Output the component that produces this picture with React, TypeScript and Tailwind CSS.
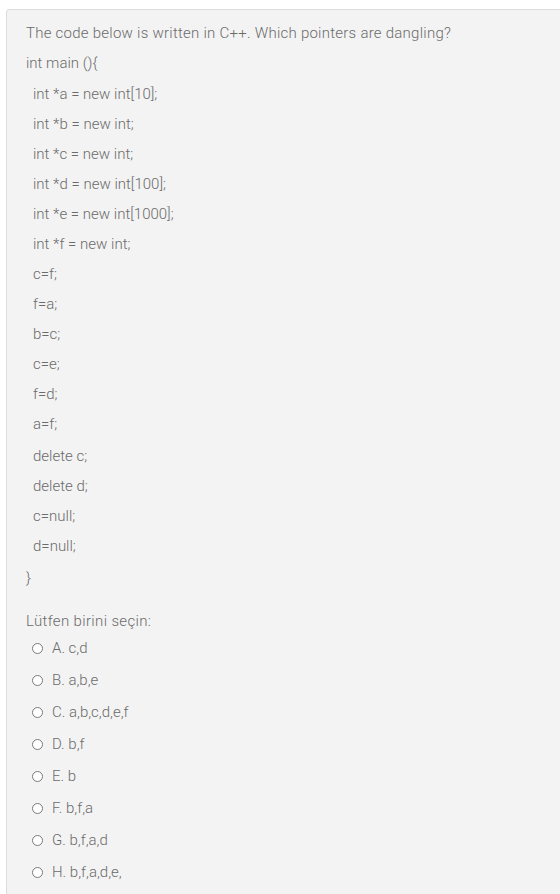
import React from 'react';

const codeLines: { text: string; extra?: string }[] = [
  { text: 'int *a = new int[10];', extra: 'mt-[1px]' },
  { text: 'int *b = new int;' },
  { text: 'int *c = new int;' },
  { text: 'int *d = new int[100];' },
  { text: 'int *e = new int[1000];' },
  { text: 'int *f = new int;' },
  { text: 'c=f;' },
  { text: 'f=a;' },
  { text: 'b=c;' },
  { text: 'c=e;' },
  { text: 'f=d;' },
  { text: 'a=f;' },
  { text: 'delete c;', extra: 'mt-[2px]' },
  { text: 'delete d;' },
  { text: 'c=null;' },
  { text: 'd=null;' },
];

const options = ['A. c,d', 'B. a,b,e', 'C. a,b,c,d,e,f', 'D. b,f', 'E. b', 'F. b,f,a', 'G. b,f,a,d', 'H. b,f,a,d,e,'];

export default function App() {
  return (
    <div
      className="w-[560px] h-[894px] overflow-hidden bg-white pt-[9px] pl-[6px] text-[15px] font-light text-[#6b6b6b]"
      style={{ fontFamily: '"Roboto Slab", Roboto, "Noto Sans", sans-serif' }}
    >
      <div className="w-[600px] h-[920px] rounded-[3px] border border-[#dcdcdc] bg-[#f3f3f3] pl-[19px] pt-[8px]">
        <div className="h-[30px] flex items-center tracking-[0.25px]">
          The code below is written in C++. Which pointers are dangling?
        </div>
        <div className="h-[30px] flex items-center">{'int main (){'}</div>
        {codeLines.map((l) => (
          <div key={l.text} className={`h-[30px] flex items-center pl-[7px] ${l.extra ?? ''}`}>
            {l.text}
          </div>
        ))}
        <div className="h-[30px] mt-[2px] flex items-center">{'}'}</div>

        <div className="mt-[13px] h-[30px] flex items-center tracking-[0.35px]">Lütfen birini seçin:</div>
        <div className="-mt-[4px] flex flex-col">
          {options.map((o) => (
            <label key={o} className="h-[32px] flex items-center">
              <span className="ml-[6px] w-[11px] h-[11px] rounded-full border-[1.5px] border-[#7a7a7a] bg-white" />
              <span className="ml-[9px]">{o}</span>
            </label>
          ))}
        </div>
      </div>
    </div>
  );
}
